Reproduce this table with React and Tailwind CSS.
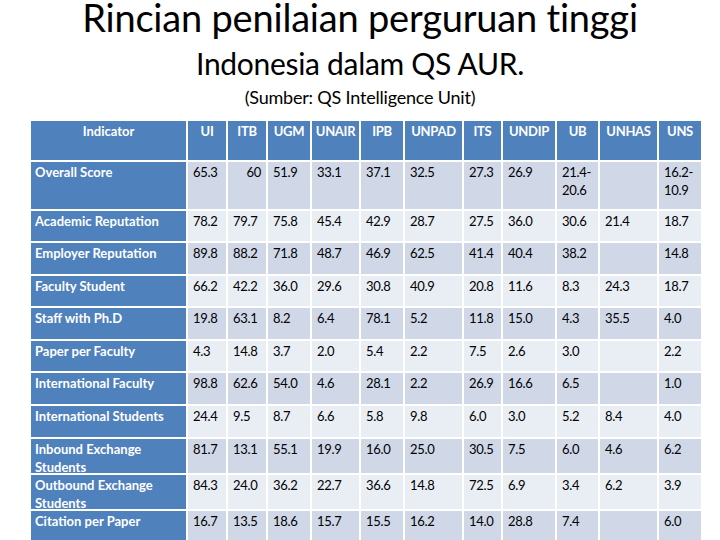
import React from "react";

const cols = ["UI","ITB","UGM","UNAIR","IPB","UNPAD","ITS","UNDIP","UB","UNHAS","UNS"];

const rows = [
  { name: "Overall Score", h: "h-[47px]", vals: ["65.3", "60", "51.9", "33.1", "37.1", "32.5", "27.3", "26.9", "21.4-\n20.6", "", "16.2-\n10.9"] },
  { name: "Academic Reputation", h: "h-[30px]", vals: ["78.2","79.7","75.8","45.4","42.9","28.7","27.5","36.0","30.6","21.4","18.7"] },
  { name: "Employer Reputation", h: "h-[31px]", vals: ["89.8","88.2","71.8","48.7","46.9","62.5","41.4","40.4","38.2","","14.8"] },
  { name: "Faculty Student", h: "h-[30px]", vals: ["66.2","42.2","36.0","29.6","30.8","40.9","20.8","11.6","8.3","24.3","18.7"] },
  { name: "Staff with Ph.D", h: "h-[31px]", vals: ["19.8","63.1","8.2","6.4","78.1","5.2","11.8","15.0","4.3","35.5","4.0"] },
  { name: "Paper per Faculty", h: "h-[30px]", vals: ["4.3","14.8","3.7","2.0","5.4","2.2","7.5","2.6","3.0","","2.2"] },
  { name: "International Faculty", h: "h-[31px]", vals: ["98.8","62.6","54.0","4.6","28.1","2.2","26.9","16.6","6.5","","1.0"] },
  { name: "International Students", h: "h-[31px]", vals: ["24.4","9.5","8.7","6.6","5.8","9.8","6.0","3.0","5.2","8.4","4.0"] },
  { name: "Inbound Exchange Students", h: "h-[34px]", vals: ["81.7","13.1","55.1","19.9","16.0","25.0","30.5","7.5","6.0","4.6","6.2"] },
  { name: "Outbound Exchange Students", h: "h-[34px]", vals: ["84.3","24.0","36.2","22.7","36.6","14.8","72.5","6.9","3.4","6.2","3.9"] },
  { name: "Citation per Paper", h: "h-[31px]", vals: ["16.7","13.5","18.6","15.7","15.5","16.2","14.0","28.8","7.4","","6.0"] },
];

export default function App() {
  return (
    <div className="w-[720px] h-[540px] overflow-hidden bg-white" style={{ fontFamily: "Lato, 'Open Sans', sans-serif" }}>
      <div className="flex flex-col items-center text-black">
        <div className="text-[38px] leading-[34px] tracking-[-0.2px]">Rincian penilaian perguruan tinggi</div>
        <div className="text-[30px] leading-[32px] mt-[13px] tracking-[-0.3px]">Indonesia dalam QS AUR.</div>
        <div className="text-[18px] leading-[22px] mt-[7px] tracking-[-0.2px]">(Sumber: QS Intelligence Unit)</div>
      </div>
      <div className="ml-[31px] mt-[13px] grid gap-[2px] grid-cols-[155px_38px_38px_42px_47px_42px_57px_37px_52px_41px_57px_42px] text-[13px] leading-[18px]">
        <div className="h-[39px] bg-[#4f81bd] text-white font-bold text-center pt-[1px]">Indicator</div>
        {cols.map((c) => (
          <div key={c} className="h-[39px] bg-[#4f81bd] text-white font-bold text-center pt-[1px] tracking-[-0.3px]">{c}</div>
        ))}
        {rows.map((r, i) => {
          const bg = i % 2 === 0 ? "bg-[#d0d8e8]" : "bg-[#e9edf4]";
          return (
            <React.Fragment key={r.name}>
              <div className={`${r.h} bg-[#4f81bd] text-white font-bold px-[4px] pt-[1px] whitespace-nowrap`}>
                {r.name.startsWith("Inbound") || r.name.startsWith("Outbound") ? (
                  <>{r.name.replace(" Students", "")}<br />Students</>
                ) : r.name}
              </div>
              {r.vals.map((v, j) => (
                <div key={j} className={`${r.h} ${bg} text-black px-[5px] pt-[1px] whitespace-pre-line tracking-[-0.3px] ${i === 0 && j === 1 ? "text-right" : ""}`}>
                  {v}
                </div>
              ))}
            </React.Fragment>
          );
        })}
      </div>
    </div>
  );
}
